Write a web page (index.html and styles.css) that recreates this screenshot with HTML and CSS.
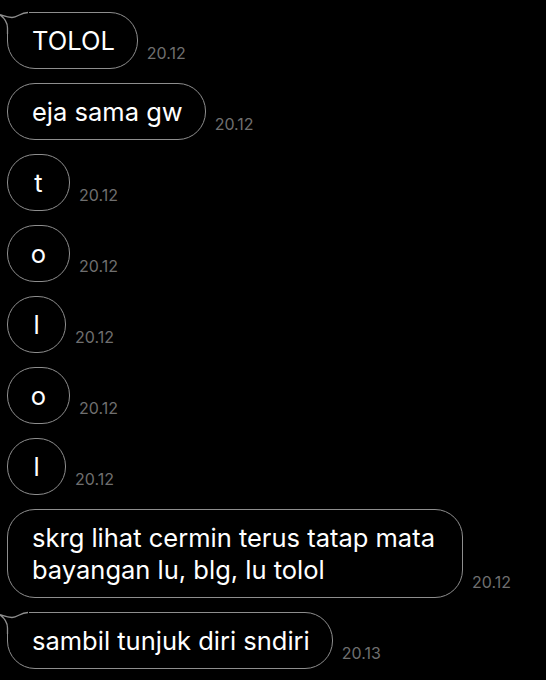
FILE: index.html
```html
<!DOCTYPE html>
<html lang="id">
  <head>
    <meta charset="UTF-8" />
    <meta name="viewport" content="width=device-width, initial-scale=1.0" />
    <title>chat</title>
    <link rel="stylesheet" href="styles.css">
  </head>
  <body>
    <div class="chat">
      <div class="row">
        <div class="bubble has-tail">
          <svg class="tail" width="40" height="40" viewBox="0 0 40 40">
            <rect x="6" y="1" width="24" height="24" fill="#000" />
            <path d="M29 4.5 C21 4.5 19 9.5 13 9.5 C8 9.5 4 7.5 0.5 6.5 C4 9 8.5 13 8.5 20 L8.5 26" fill="#000" stroke="#8e8e8e" stroke-width="1.3" />
          </svg>
          TOLOL
        </div>
        <span class="time">20.12</span>
      </div>
      <div class="row">
        <div class="bubble">eja sama gw</div>
        <span class="time">20.12</span>
      </div>
      <div class="row">
        <div class="bubble single">t</div>
        <span class="time">20.12</span>
      </div>
      <div class="row">
        <div class="bubble single">o</div>
        <span class="time">20.12</span>
      </div>
      <div class="row">
        <div class="bubble single narrow">l</div>
        <span class="time">20.12</span>
      </div>
      <div class="row">
        <div class="bubble single">o</div>
        <span class="time">20.12</span>
      </div>
      <div class="row">
        <div class="bubble single narrow">l</div>
        <span class="time">20.12</span>
      </div>
      <div class="row">
        <div class="bubble wide">skrg lihat cermin terus tatap mata<br>bayangan lu, blg, lu tolol</div>
        <span class="time">20.12</span>
      </div>
      <div class="row">
        <div class="bubble has-tail">
          <svg class="tail" width="40" height="40" viewBox="0 0 40 40">
            <rect x="6" y="1" width="24" height="24" fill="#000" />
            <path d="M29 4.5 C21 4.5 19 9.5 13 9.5 C8 9.5 4 7.5 0.5 6.5 C4 9 8.5 13 8.5 20 L8.5 26" fill="#000" stroke="#8e8e8e" stroke-width="1.3" />
          </svg>
          sambil tunjuk diri sndiri
        </div>
        <span class="time">20.13</span>
      </div>
    </div>
  </body>
</html>
```

FILE: styles.css
```css
html,
body {
  margin: 0;
  background: #000;
}

body {
  font-family: Inter, "Liberation Sans", sans-serif;
  color: #fff;
}

.chat {
  display: flex;
  flex-direction: column;
  gap: 14px;
  padding: 12px 0 0 7px;
}

.row {
  display: flex;
  align-items: flex-end;
  gap: 9px;
}

.bubble {
  position: relative;
  border: 1px solid #8e8e8e;
  border-radius: 28px;
  padding: 11.5px 22px 11.5px 24px;
  font-size: 25.5px;
  line-height: 32px;
  white-space: nowrap;
}

.bubble.single {
  box-sizing: border-box;
  width: 63px;
  padding: 11.5px 0;
  text-align: center;
}

.bubble.narrow {
  width: 59px;
}

.bubble.wide {
  padding-right: 27px;
}

.bubble.has-tail {
  border-top-left-radius: 0;
}

.tail {
  position: absolute;
  left: -9px;
  top: -5px;
}

.time {
  font-size: 16px;
  line-height: 18px;
  color: #6f6f6f;
  padding-bottom: 7px;
}
```
